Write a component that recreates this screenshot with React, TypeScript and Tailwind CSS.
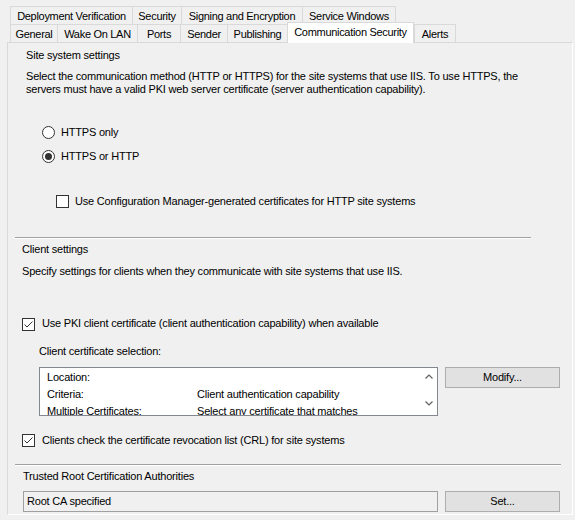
import React from "react";

const font = { fontFamily: '"Liberation Sans", Arial, sans-serif' };

function Tab({ label, w, selected }: { label: string; w: number; selected?: boolean }) {
  if (selected) {
    return (
      <div
        className="relative z-10 -mt-[2px] h-[21px] bg-white border-l border-t border-r border-[#d9d9d9] flex items-start justify-center pt-[3px] leading-[13px] shrink-0"
        style={{ width: w }}
      >
        {label}
      </div>
    );
  }
  return (
    <div
      className="h-[18px] border-l border-t border-[#d9d9d9] flex items-start justify-center pt-[3px] leading-[13px] shrink-0"
      style={{ width: w }}
    >
      {label}
    </div>
  );
}

function Radio({ checked }: { checked?: boolean }) {
  return (
    <div className="w-[13px] h-[13px] rounded-full border border-[#333333] bg-white flex items-center justify-center shrink-0">
      {checked && <div className="w-[7px] h-[7px] rounded-full bg-[#333333]" />}
    </div>
  );
}

function Check({ checked }: { checked?: boolean }) {
  return (
    <div className="w-[13px] h-[13px] border border-[#333333] bg-white shrink-0 flex items-center justify-center">
      {checked && (
        <svg width="11" height="11" viewBox="0 0 11 11">
          <polyline points="1.5,5.5 4,8 9.5,2.5" fill="none" stroke="#333333" strokeWidth="1" />
        </svg>
      )}
    </div>
  );
}

function Btn({ label }: { label: string }) {
  return (
    <div className="w-[115px] h-[21px] border border-[#adadad] bg-[#e1e1e1] flex items-center justify-center leading-[13px] text-black">
      {label}
    </div>
  );
}

export default function App() {
  return (
    <div
      className="w-[575px] h-[520px] bg-[#f0f0f0] overflow-hidden text-[11px] tracking-[-0.2px] text-black"
      style={font}
    >
      {/* Tabs */}
      <div className="pt-[6px] pl-[10px] tracking-[-0.3px]">
        <div className="flex h-[18px]">
          <Tab label="Deployment Verification" w={122} />
          <Tab label="Security" w={49} />
          <Tab label="Signing and Encryption" w={121} />
          <div className="border-r border-[#d9d9d9] flex">
            <Tab label="Service Windows" w={93} />
          </div>
        </div>
        <div className="flex h-[18px]">
          <Tab label="General" w={47} />
          <Tab label="Wake On LAN" w={80} />
          <Tab label="Ports" w={43} />
          <Tab label="Sender" w={47} />
          <Tab label="Publishing" w={60} />
          <Tab label="Communication Security" w={127} selected />
          <div className="border-r border-[#d9d9d9] flex">
            <Tab label="Alerts" w={41} />
          </div>
        </div>
      </div>

      {/* Panel */}
      <div className="ml-[7px] w-[566px] h-[473px] border-l border-t border-[#d9d9d9] border-r-white border-b-white border-r border-b flex flex-col">
        <div className="ml-[18px] mt-[6px] leading-[13px]">Site system settings</div>
        <div className="ml-[18px] mt-[8px] leading-[13px]">
          Select the communication method (HTTP or HTTPS) for the site systems that use IIS. To use HTTPS, the
          <br />
          servers must have a valid PKI web server certificate (server authentication capability).
        </div>

        <div className="ml-[34px] mt-[30px] flex items-center gap-[6px] h-[13px] leading-[13px]">
          <Radio />
          <span>HTTPS only</span>
        </div>
        <div className="ml-[34px] mt-[11px] flex items-center gap-[6px] h-[13px] leading-[13px]">
          <Radio checked />
          <span>HTTPS or HTTP</span>
        </div>

        <div className="ml-[48px] mt-[32px] flex items-center gap-[6px] h-[13px] leading-[13px]">
          <Check />
          <span>Use Configuration Manager-generated certificates for HTTP site systems</span>
        </div>

        <div className="ml-[7px] mt-[29px] w-[516px] border-t border-[#a0a0a0] border-b border-b-white" />

        <div className="ml-[14px] mt-[4px] leading-[13px]">Client settings</div>
        <div className="ml-[14px] mt-[9px] leading-[13px]">
          Specify settings for clients when they communicate with site systems that use IIS.
        </div>

        <div className="ml-[14px] mt-[39px] flex items-start gap-[7px] leading-[13px]">
          <div className="mt-[1px]">
            <Check checked />
          </div>
          <span>Use PKI client certificate (client authentication capability) when available</span>
        </div>

        <div className="ml-[31px] mt-[14px] leading-[13px]">Client certificate selection:</div>

        <div className="ml-[31px] mt-[9px] flex items-start gap-[7px]">
          <div className="w-[399px] h-[49px] border border-[#828790] bg-white flex overflow-hidden">
            <div className="flex-1 pl-[7px] pt-[1px] flex flex-col">
              <div className="h-[17px] flex items-center leading-[13px] shrink-0">
                <span className="w-[150px]">Location:</span>
              </div>
              <div className="h-[17px] flex items-center leading-[13px] shrink-0">
                <span className="w-[150px]">Criteria:</span>
                <span>Client authentication capability</span>
              </div>
              <div className="h-[17px] flex items-center leading-[13px] shrink-0">
                <span className="w-[150px]">Multiple Certificates:</span>
                <span>Select any certificate that matches</span>
              </div>
            </div>
            <div className="w-[17px] flex flex-col items-center pt-[6px] gap-[22px]">
              <svg width="8" height="5" viewBox="0 0 8 5">
                <polyline points="0.5,4.5 4,1 7.5,4.5" fill="none" stroke="#606060" strokeWidth="1.2" />
              </svg>
              <svg width="8" height="5" viewBox="0 0 8 5">
                <polyline points="0.5,0.5 4,4 7.5,0.5" fill="none" stroke="#606060" strokeWidth="1.2" />
              </svg>
            </div>
          </div>
          <Btn label="Modify..." />
        </div>

        <div className="ml-[14px] mt-[17px] flex items-start gap-[7px] leading-[13px]">
          <div className="mt-[1px]">
            <Check checked />
          </div>
          <span className="mt-[1px]">Clients check the certificate revocation list (CRL) for site systems</span>
        </div>

        <div className="ml-[7px] mt-[17px] w-[546px] border-t border-[#a0a0a0] border-b border-b-white" />

        <div className="ml-[15px] mt-[4px] leading-[13px]">Trusted Root Certification Authorities</div>

        <div className="ml-[15px] mt-[8px] flex items-start gap-[7px]">
          <div className="w-[415px] h-[21px] border border-[#a0a0a0] bg-[#f0f0f0] flex items-center pl-[3px] leading-[13px]">
            Root CA specified
          </div>
          <Btn label="Set..." />
        </div>
      </div>
    </div>
  );
}
